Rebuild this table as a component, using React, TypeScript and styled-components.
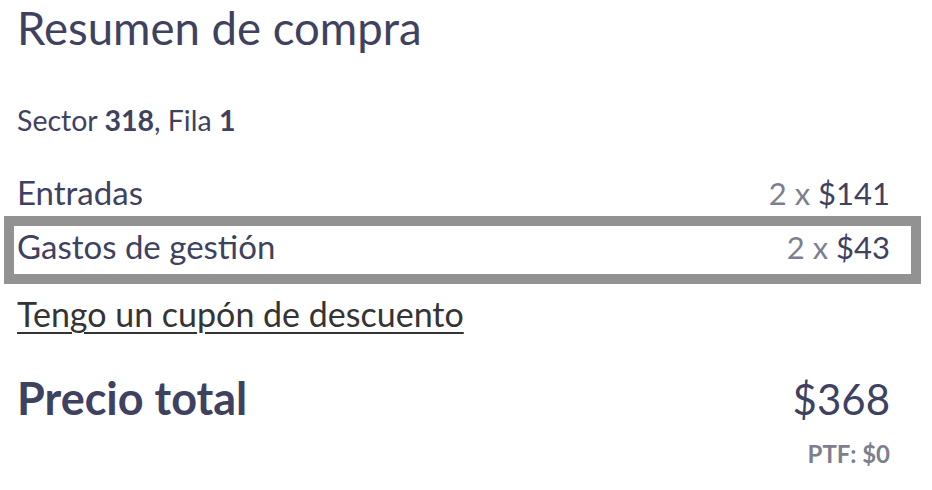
import React from "react";
import styled, { createGlobalStyle } from "styled-components";

const GlobalStyle = createGlobalStyle`
  body {
    margin: 0;
    background: #fff;
    font-family: Lato, "Noto Sans", sans-serif;
    color: #3e4260;
  }
`;

const SummaryContainer = styled.div`
  width: 932px;
  padding: 0 42px 0 17px;
  box-sizing: border-box;
  display: flex;
  flex-direction: column;
`;

const Title = styled.h1`
  margin: 0;
  font-size: 45.5px;
  font-weight: 400;
  line-height: 55px;
  color: #3e4260;
`;

const Seat = styled.div`
  margin-top: 49px;
  font-size: 28.5px;
  line-height: 32px;

  b {
    font-weight: 700;
  }
`;

const Row = styled.div<{ $highlight?: boolean; $gap: number }>`
  display: flex;
  justify-content: space-between;
  align-items: baseline;
  margin-top: ${p => p.$gap}px;
  font-size: 33px;
  line-height: 40px;

  ${p =>
    p.$highlight &&
    `
    margin-left: -13px;
    margin-right: -31px;
    padding: 0 21px 7px 3px;
    border: 10px solid #929292;
  `}
`;

const Price = styled.span`
  font-size: 31px;
  color: #3e4260;
`;

const Qty = styled.span`
  color: #7d7f8f;
`;

const CouponLink = styled.a`
  align-self: flex-start;
  margin-top: 10px;
  font-size: 34px;
  line-height: 40px;
  color: #343434;
  text-decoration: underline;
  text-decoration-thickness: 2px;
  text-underline-offset: 5px;
  cursor: pointer;
`;

const TotalRow = styled.div`
  margin-top: 38px;
  display: flex;
  justify-content: space-between;
  align-items: baseline;
  font-size: 45px;
  line-height: 52px;
  font-weight: 700;
`;

const TotalPrice = styled.span`
  font-size: 42px;
  font-weight: 400;
`;

const Fee = styled.div`
  align-self: flex-end;
  margin-top: 14px;
  font-size: 24px;
  line-height: 30px;
  font-weight: 700;
  color: #7d7f8f;
`;

const LineItem: React.FC<{
  label: string;
  qty: number;
  price: number;
  gap: number;
  highlight?: boolean;
}> = ({ label, qty, price, gap, highlight }) => (
  <Row $highlight={highlight} $gap={gap}>
    <span>{label}</span>
    <Price>
      <Qty>{qty} x </Qty>${price}
    </Price>
  </Row>
);

const App: React.FC = () => {
  return (
    <>
      <GlobalStyle />
      <SummaryContainer>
        <Title>Resumen de compra</Title>
        <Seat>
          Sector <b>318</b>, Fila <b>1</b>
        </Seat>
        <LineItem label="Entradas" qty={2} price={141} gap={36} />
        <LineItem label="Gastos de gestión" qty={2} price={43} gap={3} highlight />
        <CouponLink>Tengo un cupón de descuento</CouponLink>
        <TotalRow>
          <span>Precio total</span>
          <TotalPrice>$368</TotalPrice>
        </TotalRow>
        <Fee>PTF: $0</Fee>
      </SummaryContainer>
    </>
  );
};

export default App;
